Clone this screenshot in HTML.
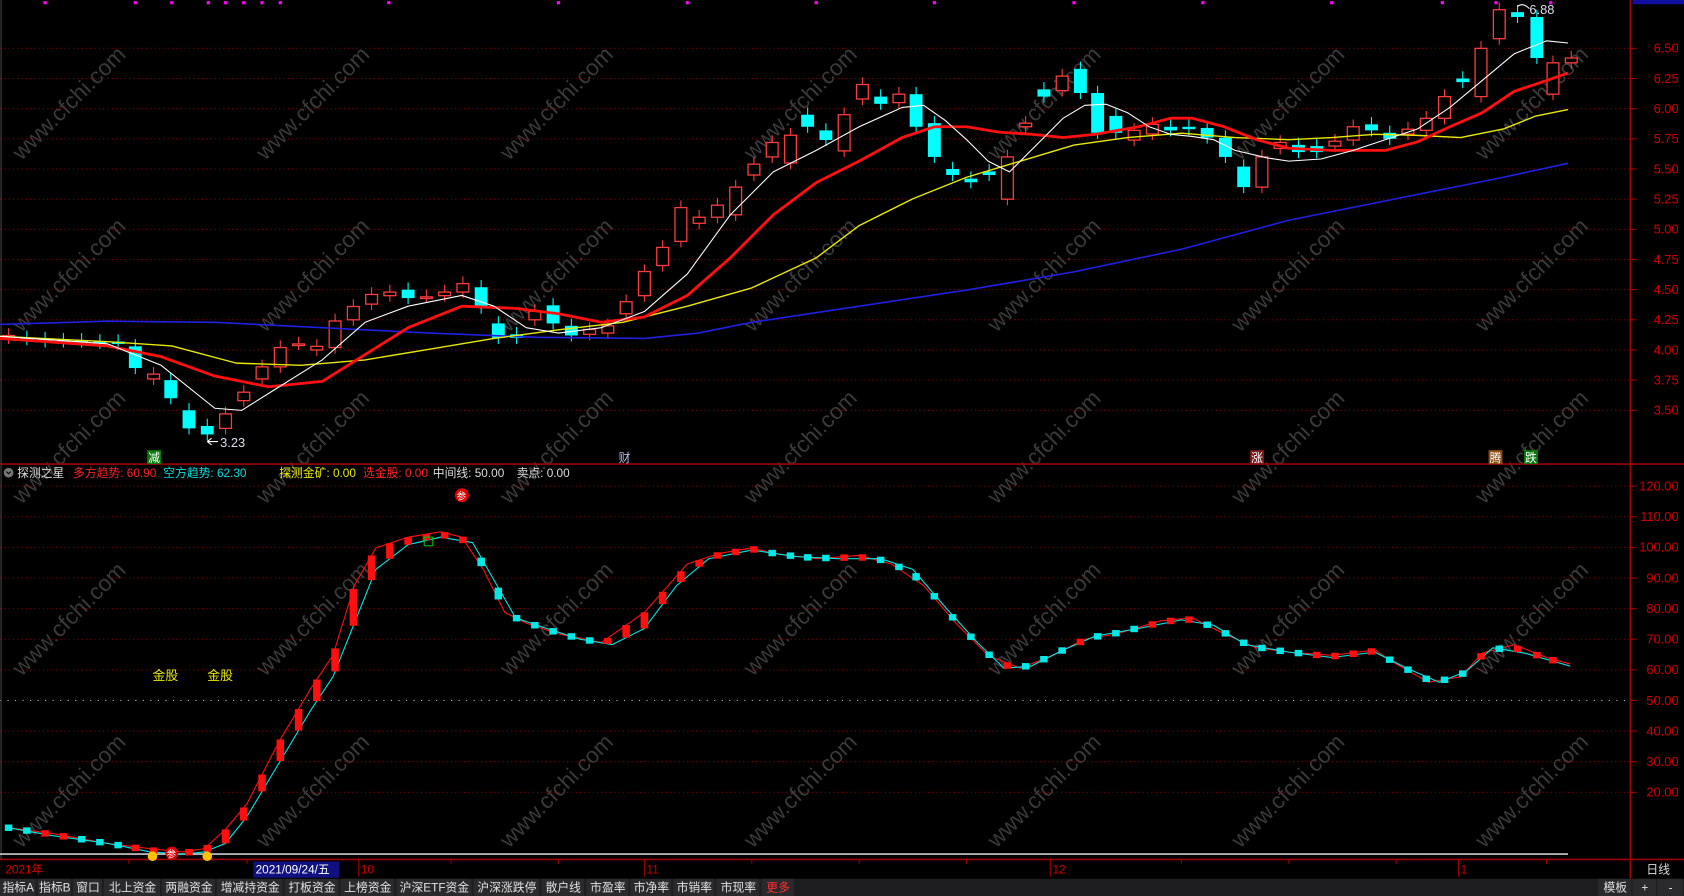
<!DOCTYPE html>
<html><head><meta charset="utf-8"><style>
html,body{margin:0;padding:0;background:#000;overflow:hidden;width:1684px;height:896px}
svg{display:block;position:absolute;left:0;top:0}
text{font-family:"Liberation Sans","Noto Sans CJK SC",sans-serif}
</style></head><body>
<svg id="s" width="1684" height="896" viewBox="0 0 1568 834" preserveAspectRatio="none" xmlns="http://www.w3.org/2000/svg">
<rect width="1568" height="834" fill="#000"/>
<g id="wm"></g>
<g id="grid"></g>
<g id="main"></g>
<g id="ind"></g>
<g id="ui"></g>
</svg>
<script>
var NS="http://www.w3.org/2000/svg";
function el(p,t,a,txt){var e=document.createElementNS(NS,t);for(var k in a)e.setAttribute(k,a[k]);if(txt!=null)e.textContent=txt;document.getElementById(p).appendChild(e);return e;}
for(var r=-1;r<6;r++)for(var c=0;c<8;c++){
 var x=c*227+20, y=r*160+150;
 el("wm","text",{x:x,y:y,fill:"#3a3a3a","font-size":"21",transform:"rotate(-45 "+x+" "+y+")"},"www.cfchi.com");
}
function PY(p){return 45+(6.5-p)*112.3;}
function IY(v){return 652-(v-50)*2.85;}
var labs=[6.5,6.25,6.0,5.75,5.5,5.25,5.0,4.75,4.5,4.25,4.0,3.75,3.5];
labs.forEach(function(p){var y=PY(p);
 el("grid","line",{x1:0,y1:y,x2:1518,y2:y,stroke:"#8a0000","stroke-dasharray":"1 3"});
 el("grid","line",{x1:1518,y1:y,x2:1524,y2:y,stroke:"#a00000"});
 el("grid","text",{x:1563,y:y+4,fill:"#d00000","font-size":"12","text-anchor":"end"},p.toFixed(2));});
for(var v=20;v<=120;v+=10){var y=IY(v);
 el("grid","line",{x1:0,y1:y,x2:1518,y2:y,stroke:v==50?"#bbbbbb":"#8a0000","stroke-dasharray":"1 "+(v==50?"6":"3")});
 el("grid","line",{x1:1518,y1:y,x2:1524,y2:y,stroke:"#a00000"});
 el("grid","text",{x:1563,y:y+4,fill:"#d00000","font-size":"12","text-anchor":"end"},v.toFixed(2));}
el("grid","line",{x1:0,y1:432,x2:1568,y2:432,stroke:"#a00000","stroke-width":"1.5"});
el("grid","line",{x1:0,y1:800,x2:1568,y2:800,stroke:"#a00000","stroke-width":"1.5"});
el("grid","line",{x1:1518,y1:0,x2:1518,y2:818,stroke:"#a00000","stroke-width":"1.5"});
el("grid","line",{x1:1,y1:0,x2:1,y2:800,stroke:"#444"});
el("grid","rect",{x:1520,y:0,width:48,height:4,fill:"#1010a0"});
el("grid","line",{x1:0,y1:795,x2:1460,y2:795,stroke:"#cccccc","stroke-width":"1.5"});
[42,126,160,194,210,227,244,261,362,520,640,760,870,1000,1120,1240,1343,1393,1444].forEach(function(x){el("grid","rect",{x:x-1.5,y:1,width:3,height:3,fill:"#ff00ff"});});
var C=[[8,4.1,4.12],[25,4.1,4.09],[42,4.09,4.07],[59,4.08,4.07],[76,4.08,4.07],[93,4.07,4.06],[110,4.07,4.05],[126,4.03,3.85],[143,3.76,3.8],[159,3.75,3.6],[176,3.5,3.35],[193,3.37,3.3],[210,3.35,3.47],[227,3.58,3.65],[244,3.76,3.86],[261,3.86,4.02],[278,4.05,4.05],[295,4.0,4.03],[312,4.02,4.24],[329,4.25,4.36],[346,4.38,4.46],[363,4.45,4.48],[380,4.5,4.43],[397,4.44,4.44],[414,4.45,4.48],[431,4.48,4.55],[448,4.52,4.35],[464,4.22,4.1],[481,4.13,4.1],[498,4.25,4.32],[515,4.37,4.22],[532,4.2,4.12],[549,4.13,4.17],[566,4.14,4.2],[583,4.3,4.4],[600,4.45,4.65],[617,4.7,4.85],[634,4.9,5.18],[651,5.05,5.1],[668,5.1,5.2],[685,5.12,5.35],[702,5.45,5.54],[719,5.6,5.72],[736,5.55,5.78],[752,5.95,5.85],[769,5.82,5.74],[786,5.65,5.95],[803,6.08,6.2],[820,6.1,6.04],[837,6.05,6.12],[853,6.12,5.85],[870,5.88,5.6],[887,5.5,5.45],[904,5.42,5.39],[921,5.48,5.45],[938,5.25,5.6],[955,5.85,5.88],[972,6.16,6.1],[989,6.15,6.27],[1006,6.33,6.13],[1022,6.13,5.8],[1039,5.94,5.8],[1056,5.74,5.82],[1073,5.79,5.87],[1090,5.85,5.82],[1107,5.85,5.83],[1124,5.84,5.76],[1141,5.76,5.6],[1158,5.52,5.35],[1175,5.35,5.6],[1192,5.67,5.72],[1209,5.7,5.64],[1226,5.69,5.64],[1243,5.69,5.73],[1260,5.74,5.85],[1277,5.87,5.82],[1294,5.8,5.75],[1311,5.79,5.83],[1328,5.82,5.92],[1345,5.92,6.1],[1362,6.25,6.22],[1379,6.1,6.5],[1396,6.58,6.82],[1413,6.8,6.76],[1431,6.76,6.42],[1446,6.12,6.38],[1463,6.38,6.42]];
C.forEach(function(d){var x=d[0],o=d[1],c=d[2],up=c>=o;var hi=Math.max(o,c)+0.06,lo=Math.min(o,c)-0.05;
 var col=up?"#ff3c3c":"#00ffff";
 el("main","line",{x1:x,y1:PY(hi),x2:x,y2:PY(lo),stroke:col});
 var y1=PY(Math.max(o,c)),y2=PY(Math.min(o,c)),h=Math.max(y2-y1,1.5);
 if(up) el("main","rect",{x:x-5.5,y:y1,width:11,height:h,fill:"#000",stroke:col,"stroke-width":"1.2"});
 else el("main","rect",{x:x-6,y:y1,width:12,height:h,fill:col});
});
function pl(g,pts,col,w){el(g,"polyline",{points:pts.map(function(p){return p.join(",")}).join(" "),fill:"none",stroke:col,"stroke-width":w,"stroke-linejoin":"round"});}
pl("main",[[0,302],[100,299],[200,300],[300,305],[400,310],[500,314],[600,315],[650,310],[700,300],[800,285],[900,270],[1000,253],[1100,232],[1200,205],[1300,185],[1400,165],[1460,152]],"#2020e0",1.5);
pl("main",[[0,313],[100,318],[160,322],[220,338],[280,340],[340,335],[400,325],[460,315],[520,307],[580,300],[640,285],[700,268],[760,240],[800,210],[850,185],[900,165],[950,150],[1000,135],[1050,128],[1100,124],[1150,128],[1200,130],[1240,128],[1280,125],[1320,126],[1360,128],[1400,120],[1430,108],[1460,102]],"#e8e800",1.3);
pl("main",[[0,315],[100,322],[150,332],[200,350],[250,360],[300,355],[340,330],[380,305],[430,285],[480,287],[520,292],[560,300],[600,295],[640,275],[680,240],[720,200],[760,170],[800,150],[840,128],[870,118],[900,118],[930,123],[960,125],[990,128],[1020,125],[1060,118],[1090,110],[1110,110],[1140,118],[1170,130],[1200,138],[1240,140],[1290,140],[1320,132],[1350,118],[1380,105],[1410,85],[1440,75],[1460,68]],"#ff1010",2.6);
pl("main",[[0,313],[100,320],[150,340],[200,380],[225,382],[260,360],[300,335],[340,300],[380,285],[430,275],[460,285],[490,305],[520,310],[560,305],[600,290],[640,255],[680,200],[720,160],[760,140],[800,118],[840,100],[860,98],[880,112],[900,130],[920,150],[940,160],[960,140],[990,110],[1010,98],[1030,97],[1050,105],[1070,118],[1090,125],[1110,127],[1130,130],[1150,140],[1180,147],[1200,150],[1230,148],[1260,140],[1290,130],[1320,120],[1350,100],[1380,75],[1410,50],[1440,38],[1460,40]],"#ffffff",1);
el("main","path",{d:"M193 411 H203 M193 411 l4 -3 M193 411 l4 3",stroke:"#fff",fill:"none"});
el("main","text",{x:205,y:416,fill:"#dde","font-size":"12"},"3.23");
el("main","path",{d:"M1413 6 Q1418 2 1424 8",stroke:"#fff",fill:"none"});
el("main","text",{x:1424,y:13,fill:"#dde","font-size":"12"},"6.88");
function tag(x,y,t,bg,fg){if(bg)el("ui","rect",{x:x-1,y:y-11,width:13,height:13,fill:bg});el("ui","text",{x:x,y:y,fill:fg,"font-size":"11"},t);}
tag(138,430,"减","#0a7a0a","#fff");tag(576,430,"财",null,"#bbe");tag(1165,430,"涨","#7a1a1a","#fff");tag(1387,430,"腾","#8a4a10","#fff");tag(1420,430,"跌","#0a7a0a","#fff");
var R=[[5,770],[50,776],[100,785],[140,790],[170,793],[190,790],[210,772],[230,748],[260,690],[290,640],[310,610],[330,545],[350,510],[380,500],[410,495],[430,500],[450,530],[470,570],[490,580],[520,590],[560,598],[600,570],[640,525],[670,515],[700,510],[720,515],[760,520],[800,517],[830,525],[860,545],[890,580],[920,610],[950,622],[980,610],[1010,595],[1040,590],[1080,578],[1110,575],[1140,590],[1170,603],[1200,607],[1240,610],[1280,605],[1300,618],[1330,635],[1360,630],[1380,608],[1410,600],[1440,612],[1462,618]];
var Cy=[[5,770],[50,778],[100,785],[140,793],[170,795],[190,793],[210,785],[230,760],[260,710],[290,660],[310,630],[330,580],[350,530],[380,507],[410,500],[440,505],[460,540],[480,575],[500,582],[540,595],[570,600],[600,585],[630,545],[660,520],[700,512],[740,518],[780,520],[820,520],[850,530],[880,565],[910,598],[935,622],[960,620],[990,605],[1020,592],[1060,585],[1100,577],[1130,582],[1160,600],[1200,607],[1240,612],[1280,607],[1310,622],[1340,635],[1365,625],[1390,603],[1420,608],[1462,620]];
function ip(a,x){for(var i=0;i<a.length-1;i++)if(x>=a[i][0]&&x<=a[i+1][0]){var t=(x-a[i][0])/(a[i+1][0]-a[i][0]);return a[i][1]+t*(a[i+1][1]-a[i][1]);}return a[a.length-1][1];}
pl("ind",R,"#ff1010",1);pl("ind",Cy,"#00e8e8",1);
C.forEach(function(d){var x=d[0];if(x<8||x>1462)return;var r=ip(R,x),c=ip(Cy,x);var up=r<c-1;
 var y1=Math.min(r,c),h=Math.abs(r-c);if(h<5){y1=(r+c)/2-3;h=6;}
 el("ind","rect",{x:x-3.5,y:y1,width:7,height:h,fill:up?"#ff1010":"#00e8e8"});});
el("ind","circle",{cx:142,cy:797,r:4.5,fill:"#ffc000"});el("ind","circle",{cx:193,cy:797,r:4.5,fill:"#ffc000"});
el("ind","circle",{cx:160,cy:794,r:6,fill:"#e00000"});el("ind","text",{x:155,y:798,fill:"#fff","font-size":"9"},"参");
el("ind","circle",{cx:430,cy:461,r:6.5,fill:"#e00000"});el("ind","text",{x:425,y:465,fill:"#fff","font-size":"9"},"参");
el("ind","text",{x:142,y:633,fill:"#e8e800","font-size":"12"},"金股");el("ind","text",{x:193,y:633,fill:"#e8e800","font-size":"12"},"金股");
el("ind","rect",{x:395,y:500,width:8,height:8,fill:"none",stroke:"#00c000"});
el("ui","circle",{cx:8,cy:440,r:4.5,fill:"#777"});el("ui","path",{d:"M6 439 l2 2 l2 -2",stroke:"#000",fill:"none"});
[["探测之星",16,"#ddd"],["多方趋势: 60.90",68,"#ff2020"],["空方趋势: 62.30",152,"#00e0e0"],["探测金矿: 0.00",260,"#e8e800"],["选金股: 0.00",338,"#ff2020"],["中间线: 50.00",403,"#ddd"],["卖点: 0.00",481,"#ddd"]].forEach(function(t){el("ui","text",{x:t[1],y:444,fill:t[2],"font-size":"11"},t[0]);});
el("ui","text",{x:5,y:813,fill:"#d00000","font-size":"11"},"2021年");
el("ui","rect",{x:236,y:802,width:80,height:15,fill:"#101080"});
el("ui","text",{x:238,y:813,fill:"#fff","font-size":"11"},"2021/09/24/五");
[[334,"10"],[600,"11"],[978,"12"],[1358,"1"]].forEach(function(t){el("ui","line",{x1:t[0],y1:800,x2:t[0],y2:816,stroke:"#a00000"});el("ui","text",{x:t[0]+2,y:813,fill:"#d00000","font-size":"11"},t[1]);});
[120,230,420,520,700,800,900,1100,1200,1300,1440].forEach(function(x){el("ui","line",{x1:x,y1:800,x2:x,y2:804,stroke:"#a00000"});});
el("ui","text",{x:1533,y:813,fill:"#ddd","font-size":"11"},"日线");
el("ui","rect",{x:0,y:818,width:1568,height:16,fill:"#1e1e20"});
var B=[["指标A",0,34],["指标B",35,67],["窗口",68,96],["北上资金",97,150],["两融资金",151,201],["增减持资金",202,264],["打板资金",265,316],["上榜资金",317,368],["沪深ETF资金",369,440],["沪深涨跌停",441,503],["散户线",504,545],["市盈率",546,586],["市净率",587,626],["市销率",627,666],["市现率",667,708],["更多",709,740],["模板",1488,1520],["+",1520,1543],["-",1543,1568]];
B.forEach(function(b,i){el("ui","rect",{x:b[1],y:818,width:b[2]-b[1]-1,height:16,fill:"#2a2a2c"});el("ui","text",{x:(b[1]+b[2])/2,y:830,fill:b[0]=="更多"?"#ff3030":"#e0e0e0","font-size":"11","text-anchor":"middle"},b[0]);});
</script>
</body></html>
